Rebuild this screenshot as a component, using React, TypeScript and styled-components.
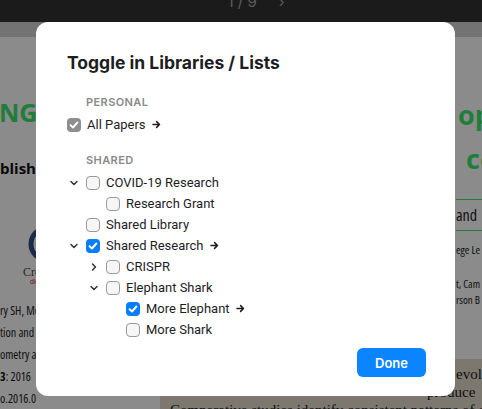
import React, { useState } from 'react';
import styled, { createGlobalStyle } from 'styled-components';

const GlobalStyle = createGlobalStyle`
  html, body {
    margin: 0;
    padding: 0;
    width: 482px;
    height: 409px;
    overflow: hidden;
    background: #8b8b8b;
  }
`;

interface TreeNode {
  id: string;
  name: string;
  checked: boolean;
  link?: boolean;
  open?: boolean;
  children?: TreeNode[];
}

const personal: TreeNode[] = [{ id: 'all', name: 'All Papers', checked: true, link: true }];

const shared: TreeNode[] = [
  {
    id: 'covid',
    name: 'COVID-19 Research',
    checked: false,
    open: true,
    children: [{ id: 'grant', name: 'Research Grant', checked: false }],
  },
  { id: 'lib', name: 'Shared Library', checked: false },
  {
    id: 'sr',
    name: 'Shared Research',
    checked: true,
    link: true,
    open: true,
    children: [
      { id: 'crispr', name: 'CRISPR', checked: false, open: false, children: [{ id: 'c1', name: 'Cas9', checked: false }] },
      {
        id: 'shark',
        name: 'Elephant Shark',
        checked: false,
        open: true,
        children: [
          { id: 'me', name: 'More Elephant', checked: true, link: true },
          { id: 'ms', name: 'More Shark', checked: false },
        ],
      },
    ],
  },
];

/* ---------- viewer behind the dialog ---------- */

const Viewer = styled.div`
  width: 482px;
  height: 409px;
  display: flex;
  flex-direction: column;
  overflow: hidden;
  background: #ffffff;
`;

const TopBar = styled.div`
  height: 22px;
  flex-shrink: 0;
  background: #333333;
  display: flex;
  justify-content: center;
  align-items: flex-start;
  gap: 22px;
  padding-left: 30px;
  font-family: Inter, 'Liberation Sans', sans-serif;
  font-size: 15px;
  line-height: 14px;
  color: #a8a8a8;
`;

const PageCount = styled.span`
  margin-top: -5px;
`;

const Band = styled.div`
  height: 15px;
  flex-shrink: 0;
  background: #d4d4d4;
`;

const Page = styled.div`
  flex: 1;
  display: grid;
  grid-template-columns: 160px 1fr;
  background: #ffffff;
`;

const LeftCol = styled.div`
  display: flex;
  flex-direction: column;
  align-items: flex-start;
  overflow: hidden;
  white-space: nowrap;
`;

const Headline = styled.div<{ $size: number; $top: number; $indent?: number }>`
  font-family: 'Open Sans', 'DejaVu Sans', sans-serif;
  font-weight: 700;
  font-size: ${(p) => p.$size}px;
  line-height: 1;
  color: #3ae86a;
  margin-top: ${(p) => p.$top}px;
  margin-left: ${(p) => p.$indent ?? 0}px;
`;

const BoldLine = styled.div<{ $top: number }>`
  font-family: 'Open Sans', 'DejaVu Sans', sans-serif;
  font-weight: 700;
  font-size: 15px;
  line-height: 1;
  color: #111;
  margin-top: ${(p) => p.$top}px;
`;

const Logo = styled.svg`
  margin-top: 48px;
  margin-left: 26px;
  display: block;
`;

const Publisher = styled.div`
  font-family: 'Liberation Serif', serif;
  font-size: 12px;
  line-height: 12px;
  color: #444;
  margin-left: 23px;
  margin-top: 2px;
`;

const PublisherTag = styled.div`
  font-family: 'Liberation Sans', sans-serif;
  font-size: 7px;
  line-height: 8px;
  color: #d02424;
  margin-left: 30px;
`;

const Citation = styled.div`
  margin-top: 14px;
  display: flex;
  flex-direction: column;
  font-family: 'Open Sans', 'DejaVu Sans', sans-serif;
  font-stretch: condensed;
  font-size: 12px;
  line-height: 22px;
  color: #1a1a1a;
`;

const RightCol = styled.div`
  display: flex;
  flex-direction: column;
  overflow: hidden;
  white-space: nowrap;
`;

const RightStrip = styled.div`
  margin-left: 296px;
  height: 322px;
  display: flex;
  flex-direction: column;
`;

const Rule = styled.div<{ $top: number }>`
  height: 1px;
  background: #3ae86a;
  margin-top: ${(p) => p.$top}px;
`;

const SmallSans = styled.div<{ $top: number; $size?: number }>`
  font-family: 'Open Sans', 'DejaVu Sans', sans-serif;
  font-stretch: condensed;
  font-size: ${(p) => p.$size ?? 11}px;
  line-height: 1;
  color: #1a1a1a;
  margin-top: ${(p) => p.$top}px;
`;

const Abstract = styled.div`
  flex: 1;
  background: #e4dcce;
  padding-top: 6px;
  font-family: 'Liberation Serif', serif;
  font-size: 15px;
  line-height: 18px;
  color: #1a1a1a;
`;

const AbstractLine = styled.div<{ $indent: number }>`
  padding-left: ${(p) => p.$indent}px;
`;

/* ---------- dialog ---------- */

const Overlay = styled.div`
  position: fixed;
  inset: 0;
  background: rgba(0, 0, 0, 0.455);
  display: flex;
  align-items: center;
  justify-content: center;
`;

const Dialog = styled.div`
  width: 419px;
  height: 374px;
  box-sizing: border-box;
  margin-left: 9px;
  margin-top: 9px;
  padding: 30px 29px 19px 31px;
  background: #ffffff;
  border-radius: 12px;
  display: flex;
  flex-direction: column;
  font-family: Roboto, Inter, 'Liberation Sans', sans-serif;
  color: #1d1d1f;
`;

const Title = styled.h2`
  margin: 0 0 20px;
  font-family: Inter, 'Liberation Sans', sans-serif;
  font-size: 17.5px;
  line-height: 22px;
  font-weight: 700;
`;

const Section = styled.div`
  display: flex;
  flex-direction: column;
  & + & {
    margin-top: 17px;
  }
`;

const SectionLabel = styled.div`
  margin: 0 0 4px 19px;
  font-family: Inter, 'Liberation Sans', sans-serif;
  font-size: 11px;
  line-height: 16px;
  font-weight: 600;
  letter-spacing: 0.4px;
  color: #8a8a8a;
`;

const Row = styled.div<{ $level: number }>`
  height: 21px;
  display: flex;
  align-items: center;
  padding-left: ${(p) => p.$level * 20}px;
  font-size: 13px;
`;

const Toggle = styled.button`
  width: 14px;
  height: 14px;
  margin-right: 5px;
  padding: 0;
  border: 0;
  background: none;
  display: flex;
  align-items: center;
  justify-content: center;
  cursor: pointer;
  color: #333;
`;

const Box = styled.span<{ $checked: boolean; $muted?: boolean }>`
  width: 14px;
  height: 14px;
  box-sizing: border-box;
  margin-right: 6px;
  border-radius: 4px;
  display: flex;
  align-items: center;
  justify-content: center;
  cursor: pointer;
  border: ${(p) => (p.$checked ? '0' : '1px solid #9a9a9a')};
  background: ${(p) => (p.$checked ? (p.$muted ? '#8e8e8e' : '#0a7cff') : '#f6f6f6')};
`;

const Name = styled.span`
  letter-spacing: 0;
`;

const Go = styled.span`
  margin-left: 6px;
  display: flex;
  color: #1d1d1f;
`;

const Footer = styled.div`
  margin-top: auto;
  display: flex;
  justify-content: flex-end;
`;

const DoneButton = styled.button`
  width: 69px;
  height: 29px;
  border: 0;
  border-radius: 6px;
  background: #0a84ff;
  color: #ffffff;
  font-family: Inter, 'Liberation Sans', sans-serif;
  font-size: 13px;
  font-weight: 600;
  cursor: pointer;
`;

const Chevron = ({ open }: { open: boolean }) => (
  <svg width="10" height="10" viewBox="0 0 10 10" fill="none" stroke="currentColor" strokeWidth="1.5" strokeLinecap="round" strokeLinejoin="round">
    {open ? <path d="M2 3.5 L5 6.5 L8 3.5" /> : <path d="M3.5 2 L6.5 5 L3.5 8" />}
  </svg>
);

const Check = () => (
  <svg width="14" height="14" viewBox="0 0 14 14" fill="none" stroke="#fff" strokeWidth="1.9" strokeLinecap="round" strokeLinejoin="round">
    <path d="M3.6 7.2 L6 9.5 L10.4 4.5" />
  </svg>
);

const Arrow = () => (
  <svg width="9" height="9" viewBox="0 0 9 9" fill="none" stroke="currentColor" strokeWidth="1.5" strokeLinecap="round" strokeLinejoin="round">
    <path d="M1 4.5 H7.5 M4.6 1.6 L7.5 4.5 L4.6 7.4" />
  </svg>
);

const TreeRows: React.FC<{
  nodes: TreeNode[];
  level: number;
  hasToggles: boolean;
  muted?: boolean;
  checked: Record<string, boolean>;
  open: Record<string, boolean>;
  onCheck: (id: string) => void;
  onToggle: (id: string) => void;
}> = ({ nodes, level, hasToggles, muted, checked, open, onCheck, onToggle }) => (
  <>
    {nodes.map((n) => (
      <React.Fragment key={n.id}>
        <Row $level={level}>
          {hasToggles && (
            <Toggle onClick={() => onToggle(n.id)}>{n.children && <Chevron open={open[n.id]} />}</Toggle>
          )}
          <Box $checked={checked[n.id]} $muted={muted} onClick={() => !muted && onCheck(n.id)}>
            {checked[n.id] && <Check />}
          </Box>
          <Name>{n.name}</Name>
          {n.link && (
            <Go>
              <Arrow />
            </Go>
          )}
        </Row>
        {n.children && open[n.id] && (
          <TreeRows
            nodes={n.children}
            level={level + 1}
            hasToggles={hasToggles}
            checked={checked}
            open={open}
            onCheck={onCheck}
            onToggle={onToggle}
          />
        )}
      </React.Fragment>
    ))}
  </>
);

const collect = (nodes: TreeNode[], key: 'checked' | 'open', acc: Record<string, boolean> = {}) => {
  nodes.forEach((n) => {
    acc[n.id] = !!n[key];
    if (n.children) collect(n.children, key, acc);
  });
  return acc;
};

const App: React.FC = () => {
  const [checked, setChecked] = useState(() => collect([...personal, ...shared], 'checked'));
  const [open, setOpen] = useState(() => collect(shared, 'open'));

  const handleCheck = (id: string) => setChecked((c) => ({ ...c, [id]: !c[id] }));
  const handleToggle = (id: string) => setOpen((o) => ({ ...o, [id]: !o[id] }));

  return (
    <>
      <GlobalStyle />
      <Viewer>
        <TopBar>
          <PageCount>1 / 9</PageCount>
          <PageCount>›</PageCount>
        </TopBar>
        <Band />
        <Page>
          <LeftCol>
            <Headline $size={25} $top={63} $indent={-1}>
              NG
            </Headline>
            <BoldLine $top={36}>blishing</BoldLine>
            <Logo width="40" height="40" viewBox="0 0 40 40">
              <circle cx="21" cy="20" r="16" fill="none" stroke="#2f4f86" strokeWidth="5" />
            </Logo>
            <Publisher>Crossref</Publisher>
            <PublisherTag>digital</PublisherTag>
            <Citation>
              <span>ry SH, Mo</span>
              <span>tion and</span>
              <span>ometry a</span>
              <span>
                <b>3</b>: 2016
              </span>
              <span>o.2016.0</span>
            </Citation>
          </LeftCol>
          <RightCol>
            <RightStrip>
              <Headline $size={27} $top={64} $indent={2}>
                op
              </Headline>
              <Headline $size={27} $top={17} $indent={10}>
                co
              </Headline>
              <Rule $top={27} />
              <SmallSans $top={7} $size={16}>
                and
              </SmallSans>
              <Rule $top={7} />
              <SmallSans $top={13}>ege Le</SmallSans>
              <SmallSans $top={23}>t, Cam</SmallSans>
              <SmallSans $top={5}>rson B</SmallSans>
            </RightStrip>
            <Abstract>
              <AbstractLine $indent={296}>evolution</AbstractLine>
              <AbstractLine $indent={267}>produce</AbstractLine>
              <AbstractLine $indent={10}>Comparative studies identify consistent patterns of conserved</AbstractLine>
            </Abstract>
          </RightCol>
        </Page>
      </Viewer>
      <Overlay>
        <Dialog role="dialog">
          <Title>Toggle in Libraries / Lists</Title>
          <Section>
            <SectionLabel>PERSONAL</SectionLabel>
            <TreeRows
              nodes={personal}
              level={0}
              hasToggles={false}
              muted
              checked={checked}
              open={open}
              onCheck={handleCheck}
              onToggle={handleToggle}
            />
          </Section>
          <Section>
            <SectionLabel>SHARED</SectionLabel>
            <TreeRows
              nodes={shared}
              level={0}
              hasToggles
              checked={checked}
              open={open}
              onCheck={handleCheck}
              onToggle={handleToggle}
            />
          </Section>
          <Footer>
            <DoneButton>Done</DoneButton>
          </Footer>
        </Dialog>
      </Overlay>
    </>
  );
};

export default App;
